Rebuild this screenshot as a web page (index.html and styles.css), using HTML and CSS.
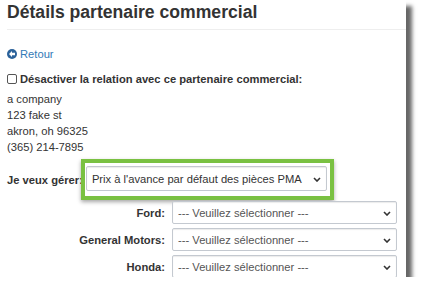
FILE: index.html
```html
<!DOCTYPE html>
<html lang="fr">
<head>
  <meta charset="UTF-8" />
  <meta name="viewport" content="width=device-width, initial-scale=1.0"/>
  <title>Détails partenaire commercial</title>
  <link rel="stylesheet" href="styles.css">
</head>
<body>
  <div class="panel">
    <h1 class="page-header">Détails partenaire commercial</h1>

    <a class="back" href="#">
      <svg class="back-icon" viewBox="0 0 10 10" width="10" height="10">
        <circle cx="5" cy="5" r="5" fill="#2b629a"/>
        <path d="M2 5 L5 2.1 L5 3.8 L8 3.8 L8 6.2 L5 6.2 L5 7.9 Z" fill="#fff"/>
      </svg>
      Retour
    </a>

    <label class="disable">
      <input type="checkbox" class="check">
      Désactiver la relation avec ce partenaire commercial:
    </label>

    <div class="address">
      <div>a company</div>
      <div>123 fake st</div>
      <div>akron, oh 96325</div>
      <div>(365) 214-7895</div>
    </div>

    <div class="manage">
      <span class="manage-label">Je veux gérer:</span>
      <div class="highlight">
        <div class="select-wrap big">
          <select class="select">
            <option>Prix à l'avance par défaut des pièces PMA</option>
          </select>
          <svg class="chevron" viewBox="0 0 8 5" width="8" height="5"><path d="M1 1 L4 4 L7 1" fill="none" stroke="#333" stroke-width="1.6"/></svg>
        </div>
      </div>
    </div>

    <div class="makes">
      <span class="make-label">Ford:</span>
      <div class="select-wrap">
        <select class="select light"><option>--- Veuillez sélectionner ---</option></select>
        <svg class="chevron" viewBox="0 0 8 5" width="8" height="5"><path d="M1 1 L4 4 L7 1" fill="none" stroke="#333" stroke-width="1.6"/></svg>
      </div>
      <span class="make-label">General Motors:</span>
      <div class="select-wrap">
        <select class="select light"><option>--- Veuillez sélectionner ---</option></select>
        <svg class="chevron" viewBox="0 0 8 5" width="8" height="5"><path d="M1 1 L4 4 L7 1" fill="none" stroke="#333" stroke-width="1.6"/></svg>
      </div>
      <span class="make-label">Honda:</span>
      <div class="select-wrap">
        <select class="select light"><option>--- Veuillez sélectionner ---</option></select>
        <svg class="chevron" viewBox="0 0 8 5" width="8" height="5"><path d="M1 1 L4 4 L7 1" fill="none" stroke="#333" stroke-width="1.6"/></svg>
      </div>
    </div>
  </div>
</body>
</html>
```

FILE: styles.css
```css
body {
  margin: 0;
  background-color: white;
  font-family: "Liberation Sans", Arial, sans-serif;
  font-size: 11.2px;
  line-height: 16px;
  color: #333;
}

.panel {
  width: 406px;
  height: 277px;
  overflow: hidden;
  padding: 2px 0 0 7px;
  box-sizing: border-box;
  background-color: white;
  box-shadow: 6px 6px 4px rgba(0, 0, 0, 0.6);
}

.page-header {
  margin: 0;
  padding-bottom: 7px;
  font-size: 17.6px;
  line-height: 20px;
  font-weight: bold;
  color: #333;
  border-bottom: 1px solid #eee;
}

.back {
  display: flex;
  align-items: center;
  gap: 3px;
  margin-top: 16px;
  color: #337ab7;
  text-decoration: none;
}

.disable {
  display: flex;
  align-items: center;
  margin-top: 9px;
  font-weight: bold;
}

.check {
  appearance: none;
  width: 10px;
  height: 10px;
  margin: 0 3px 0 0;
  border: 1px solid #555;
  border-radius: 2px;
  background-color: white;
}

.address {
  margin-top: 4px;
}

.manage {
  display: flex;
  align-items: center;
  margin-top: 4px;
}

.manage-label {
  font-weight: bold;
}

.highlight {
  margin-left: -2px;
  padding: 3px 3px 5px 1px;
  border: 4px solid #7ac142;
  background-color: white;
  box-shadow: 0 2px 4px rgba(0, 0, 0, 0.35);
}

.select-wrap {
  position: relative;
  width: 225px;
  height: 23px;
}

.select-wrap.big {
  width: 241px;
  height: 25px;
}

.select {
  appearance: none;
  width: 100%;
  height: 100%;
  margin: 0;
  padding: 0 0 0 5px;
  border: 1px solid #c4c9d0;
  border-radius: 2px;
  background-color: white;
  box-shadow: inset 0 1px 1px rgba(0, 0, 0, 0.08);
  font-family: "Liberation Sans", Arial, sans-serif;
  font-size: 11.2px;
  color: #333;
}

.select.light {
  color: #555;
}

.chevron {
  position: absolute;
  right: 6px;
  top: 50%;
  margin-top: -2px;
}

.makes {
  display: grid;
  grid-template-columns: 158px 225px;
  column-gap: 7px;
  row-gap: 4px;
  margin-top: 1px;
  align-items: center;
}

.make-label {
  text-align: right;
  font-weight: bold;
}
```
